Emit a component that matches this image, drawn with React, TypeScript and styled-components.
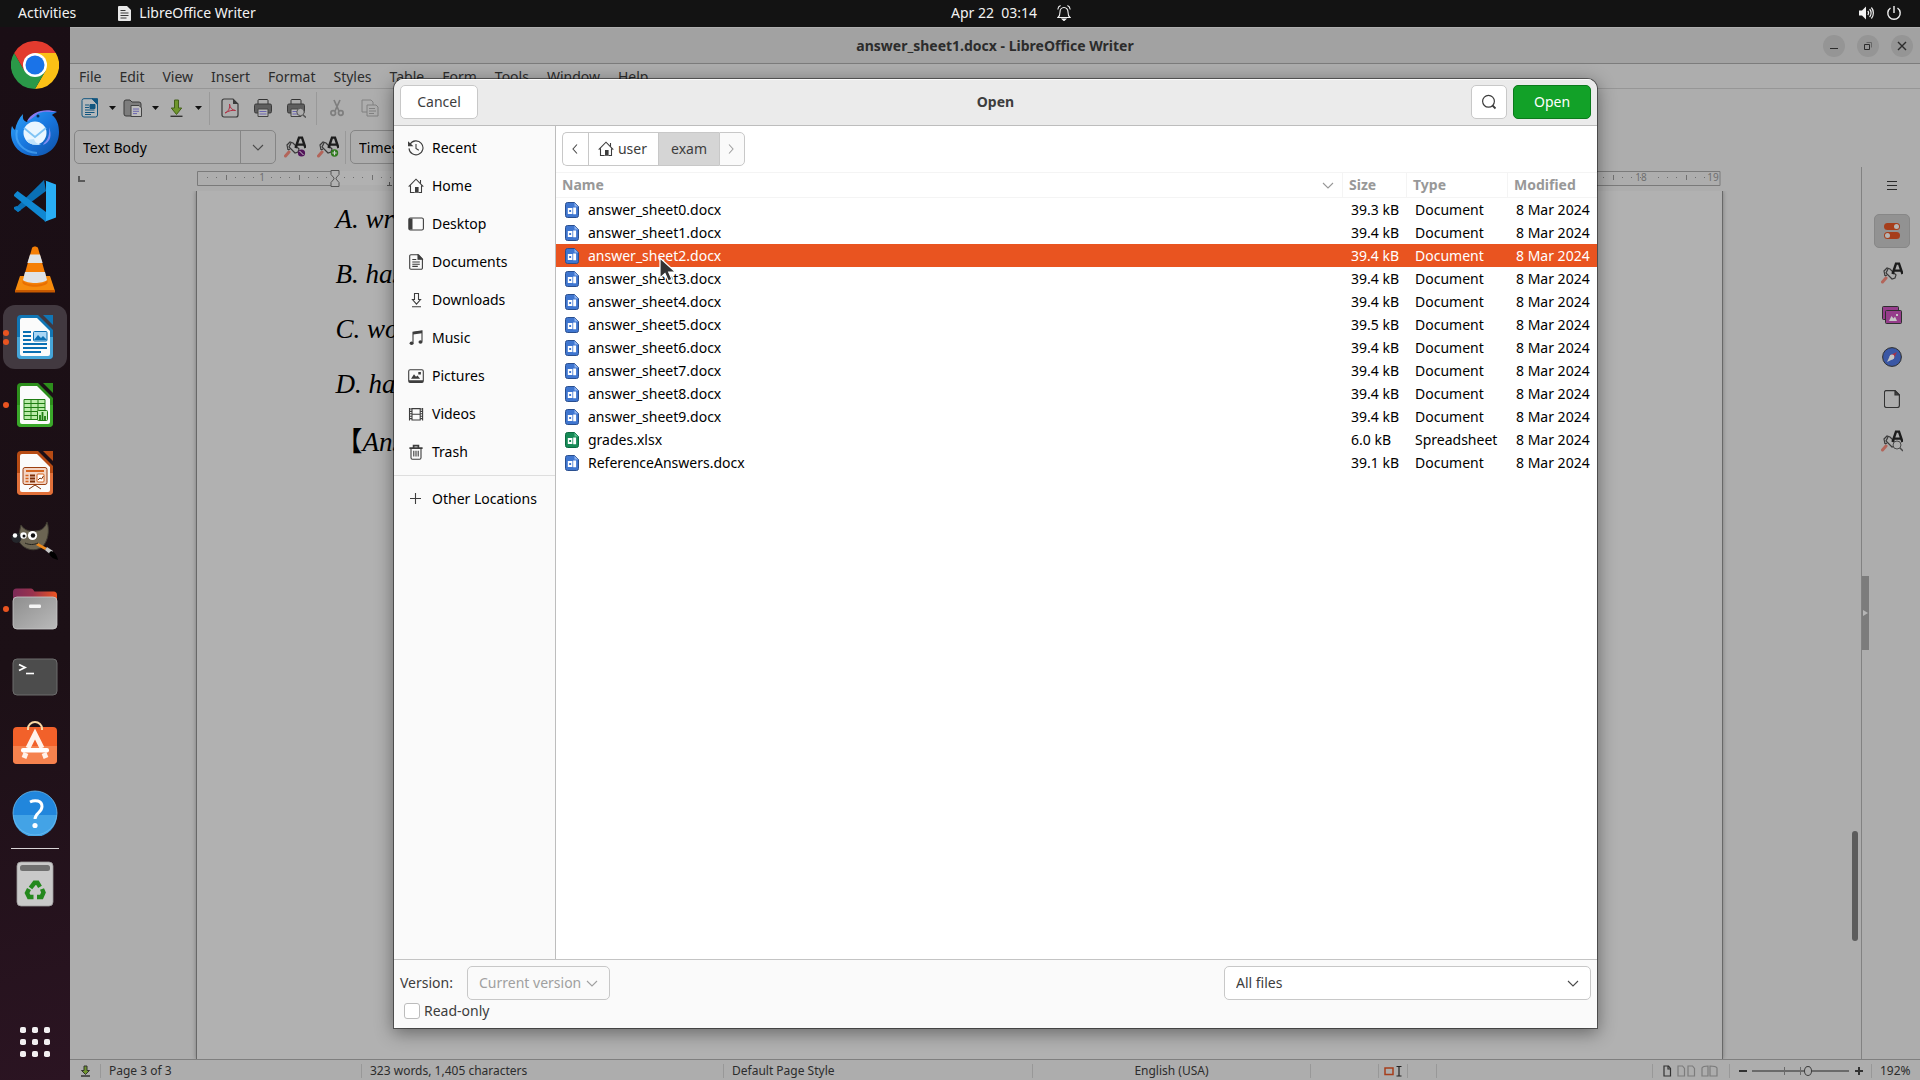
import React from "react";
import styled, { createGlobalStyle, css } from "styled-components";

const GlobalStyle = createGlobalStyle`
  * { box-sizing: border-box; }
  html, body, #root { height: 100%; margin: 0; }
  body {
    font-family: "Noto Sans", "Liberation Sans", sans-serif;
    font-size: 14px;
    line-height: 20px;
    color: #3d3d3d;
    overflow: hidden;
  }
  button, input, select { font: inherit; color: inherit; margin: 0; }
  button { padding: 0; border: 0; background: none; }
  ul { list-style: none; margin: 0; padding: 0; }
  svg { display: block; flex: none; }
`;

/* ---------- shell ---------- */

const Desktop = styled.div`
  height: 100vh;
  display: grid;
  grid-template-rows: 27px minmax(0, 1fr);
`;

const TopBar = styled.header`
  display: grid;
  grid-template-columns: 1fr auto 1fr;
  align-items: center;
  padding: 0 18px 1px;
  background: #131313;
  color: #f2f2f2;
`;

const TopGroup = styled.div<{ $end?: boolean; $gap: number }>`
  display: flex;
  align-items: center;
  gap: ${(p) => p.$gap}px;
  justify-content: ${(p) => (p.$end ? "flex-end" : "flex-start")};
`;

const AppMenu = styled.button`
  display: flex;
  align-items: center;
  gap: 8px;
`;

const Clock = styled.button`
  display: flex;
  align-items: center;
  gap: 20px;
  padding-left: 102px;
  white-space: pre;
`;

const Body = styled.div`
  display: grid;
  grid-template-columns: 70px minmax(0, 1fr);
  min-height: 0;
`;

const Dock = styled.nav`
  display: flex;
  flex-direction: column;
  align-items: center;
  gap: 4px;
  padding: 6px 0;
  background: linear-gradient(165deg, #1a0e15 0%, #1c1016 60%, #2b1422 100%);
`;

const DockItem = styled.button<{ $active?: boolean; $bottom?: boolean }>`
  position: relative;
  display: grid;
  place-items: center;
  flex: none;
  width: 64px;
  height: 64px;
  border-radius: 12px;
  background: ${(p) => (p.$active ? "#423940" : "transparent")};
  margin-top: ${(p) => (p.$bottom ? "auto" : "0")};
`;

const Dots = styled.span`
  position: absolute;
  left: 0;
  top: 0;
  bottom: 0;
  display: flex;
  flex-direction: column;
  justify-content: center;
  gap: 3px;
`;

const Dot = styled.i`
  width: 6px;
  height: 6px;
  border-radius: 50%;
  background: #e95420;
`;

const DockRule = styled.hr`
  flex: none;
  width: 48px;
  height: 1px;
  margin: -1px 0;
  border: 0;
  background: #d8d4d6;
`;

/* ---------- writer window ---------- */

const Window = styled.main`
  position: relative;
  display: grid;
  grid-template-rows: 37px 25px 38px minmax(0, 1fr) 21px;
  background: #adadad;
  color: #2c2c2c;
  min-width: 0;
`;

const TitleBar = styled.div`
  display: grid;
  grid-template-columns: 1fr auto 1fr;
  align-items: center;
  background: #a2a2a2;
  border-top: 1px solid #b0b0b0;
  border-bottom: 1px solid #7c7c7c;
  padding: 0 7px;
`;

const Title = styled.h1`
  grid-column: 2;
  margin: 0;
  font-size: 14px;
  font-weight: 700;
`;

const WinButtons = styled.div`
  display: flex;
  justify-content: flex-end;
  gap: 12px;
`;

const WinButton = styled.button`
  display: grid;
  place-items: center;
  width: 22px;
  height: 22px;
  border-radius: 50%;
  background: #959595;
`;

const MenuBar = styled.nav`
  display: flex;
  border-bottom: 1px solid #969696;
`;

const MenuItem = styled.button`
  padding: 3px 9px 1px;
`;

const ToolBar = styled.div`
  display: flex;
  align-items: center;
  gap: 6px;
  padding: 0 10px;
`;

const ToolGroup = styled.div`
  display: flex;
  align-items: center;
  gap: 13px;
  padding: 0 4px;
`;

const ToolButton = styled.button`
  display: grid;
  place-items: center;
  width: 20px;
  height: 24px;
`;

const SplitTool = styled.div`
  display: flex;
  align-items: center;
  gap: 7px;
`;

const Caret = styled.button`
  width: 10px;
  height: 24px;
  display: grid;
  place-items: center;
`;

const Rule = styled.span<{ $h: number }>`
  width: 1px;
  height: ${(p) => p.$h}px;
  background: #999;
  flex: none;
`;

const Workspace = styled.div`
  display: grid;
  grid-template-columns: minmax(0, 1fr) 59px;
  grid-template-rows: 40px minmax(0, 1fr);
  min-height: 0;
`;

const FormatBar = styled.div`
  grid-column: 1 / -1;
  display: flex;
  align-items: center;
  gap: 4px;
  padding: 0 4px;
`;

const Combo = styled.div<{ $w: number }>`
  display: flex;
  align-items: center;
  width: ${(p) => p.$w}px;
  height: 34px;
  border: 1px solid #858585;
  border-radius: 5px;
  color: #000;
  input {
    flex: 1;
    min-width: 0;
    height: 100%;
    padding: 0 8px;
    border: 0;
    background: none;
    outline: none;
  }
  button {
    display: grid;
    place-items: center;
    width: 35px;
    height: 100%;
    border-left: 1px solid #858585;
  }
`;

const Canvas = styled.div`
  display: grid;
  grid-template-columns: minmax(0, 1fr) 13px;
  grid-template-rows: 24px minmax(0, 1fr);
  min-height: 0;
`;

const RulerRow = styled.div`
  grid-column: 1;
  display: grid;
  grid-template-columns: 1fr auto 1fr;
  align-items: center;
`;

const TabMark = styled.svg`
  margin-left: 8px;
`;

const PageArea = styled.div`
  grid-column: 1;
  display: flex;
  justify-content: center;
  min-height: 0;
  overflow: hidden;
`;

const Paper = styled.article`
  width: 1527px;
  padding: 1px 139px 0;
  background: #b1b1b1;
  border: solid #686868;
  border-width: 0 1px;
  box-shadow: 0 0 4px rgba(0, 0, 0, 0.3);
  font-family: "Liberation Serif", "Noto Sans CJK SC", serif;
  font-style: italic;
  font-size: 27px;
  color: #000;
  p { margin: 0; height: 55px; line-height: 55px; }
  p:last-child { height: 60px; line-height: 60px; }
`;

const Upright = styled.span`
  font-style: normal;
`;

const ScrollTrack = styled.div`
  grid-column: 2;
  display: flex;
  flex-direction: column;
  justify-content: flex-end;
  align-items: flex-end;
  padding: 0 3px 118px 0;
`;

const ScrollThumb = styled.div`
  width: 6px;
  height: 110px;
  border-radius: 3px;
  background: #5c5c5c;
`;

const SideDeck = styled.aside`
  position: relative;
  display: flex;
  flex-direction: column;
  align-items: center;
  gap: 8px;
  padding: 2px 0 0 2px;
  border-left: 1px solid #828282;
`;

const DeckButton = styled.button<{ $active?: boolean }>`
  display: grid;
  place-items: center;
  width: 36px;
  height: 34px;
  border-radius: 5px;
  border: 1px solid ${(p) => (p.$active ? "#878787" : "transparent")};
  background: ${(p) => (p.$active ? "#929292" : "none")};
  &:first-child { margin-bottom: 3px; }
`;

const DeckHandle = styled.button`
  position: absolute;
  left: 0;
  top: 409px;
  width: 7px;
  height: 74px;
  display: grid;
  place-items: center;
  background: #7c7c7c;
`;

const StatusBar = styled.footer`
  display: flex;
  align-items: center;
  padding-top: 2px;
  border-top: 1px solid #7f7f7f;
  font-size: 12px;
  line-height: 16px;
`;

const StatusCell = styled.div<{ $w: number; $grow?: boolean; $mid?: boolean }>`
  display: flex;
  align-items: center;
  flex: ${(p) => (p.$grow ? 1 : 0)} 1 ${(p) => p.$w}px;
  gap: 5px;
  height: 14px;
  min-width: 0;
  white-space: nowrap;
  padding: 0 8px;
  justify-content: ${(p) => (p.$mid ? "center" : "flex-start")};
  border-right: 1px solid #989898;
  &:last-child { border: 0; }
`;

const Zoom = styled.input`
  appearance: none;
  width: 97px;
  height: 12px;
  margin: 0;
  background: linear-gradient(#6a6a6a, #6a6a6a) 0 5px / 100% 2px no-repeat,
    linear-gradient(#6a6a6a, #6a6a6a) 32px 2px / 1px 8px no-repeat,
    linear-gradient(#6a6a6a, #6a6a6a) 48px 2px / 1px 8px no-repeat;
  &::-webkit-slider-thumb {
    appearance: none;
    width: 8px;
    height: 10px;
    border: 1px solid #3c3c3c;
    border-radius: 50%;
    background: #adadad;
  }
`;

const StepButton = styled.button`
  width: 12px;
  height: 12px;
  display: grid;
  place-items: center;
`;

/* ---------- open dialog ---------- */

const Overlay = styled.div`
  position: absolute;
  inset: 0;
  display: grid;
  padding: 52px 323px 52px 324px;
`;

const Dialog = styled.section`
  display: grid;
  grid-template-rows: 47px minmax(0, 1fr) 69px;
  min-width: 0;
  overflow: hidden;
  border-radius: 10px 10px 0 0;
  background: #fff;
  color: #3d3d3d;
  box-shadow: 0 0 0 1px rgba(0, 0, 0, 0.45), 0 4px 18px 1px rgba(0, 0, 0, 0.42);
`;

const DialogHead = styled.header`
  display: grid;
  grid-template-columns: 1fr auto 1fr;
  align-items: center;
  padding: 0 6px 1px;
  background: #ebebeb;
  border-top: 1px solid #fbfbfb;
  border-bottom: 1px solid #bdbdbd;
`;

const DialogTitle = styled.h2`
  margin: 0;
  font-size: 14px;
  font-weight: 700;
`;

const HeadEnd = styled.div`
  display: flex;
  justify-content: flex-end;
  gap: 6px;
`;

const boxed = css`
  height: 34px;
  border: 1px solid #c8c8c8;
  border-radius: 5px;
  background: #fff;
`;

const Button = styled.button<{ $primary?: boolean; $w: number }>`
  ${boxed}
  display: grid;
  place-items: center;
  width: ${(p) => p.$w}px;
  ${(p) =>
    p.$primary &&
    css`
      background: #12a128;
      border-color: #0b7a1c;
      color: #fff;
    `}
`;

const DialogBody = styled.div`
  display: grid;
  grid-template-columns: 162px minmax(0, 1fr);
  min-height: 0;
`;

const Places = styled.nav`
  padding-top: 3px;
  background: #fafafa;
  border-right: 1px solid #bdbdbd;
  li:last-child {
    margin-top: 4px;
    padding-top: 4px;
    border-top: 1px solid #dedede;
  }
`;

const Place = styled.button`
  display: flex;
  align-items: center;
  gap: 8px;
  width: 100%;
  height: 38px;
  padding-left: 14px;
  color: #000;
  white-space: nowrap;
`;

const Files = styled.div`
  min-width: 0;
`;

const PathBar = styled.div`
  display: flex;
  margin: 6px;
  button {
    ${boxed}
    display: flex;
    align-items: center;
    justify-content: center;
    gap: 4px;
    border-radius: 0;
    border-right-width: 0;
  }
  button:first-child { border-radius: 5px 0 0 5px; }
  button:last-child { border-radius: 0 5px 5px 0; border-right-width: 1px; background: #fafafa; }
`;

const Crumb = styled.button<{ $w: number; $on?: boolean }>`
  && {
    width: ${(p) => p.$w}px;
    padding-right: ${(p) => (p.$on ? 0 : 2)}px;
    background: ${(p) => (p.$on ? "#d5d5d5" : "#fff")};
  }
`;

const Table = styled.table`
  width: 100%;
  table-layout: fixed;
  border-collapse: separate;
  border-spacing: 0;
  text-align: left;
  white-space: nowrap;
  color: #000;
  th {
    height: 26px;
    padding: 0 0 0 6px;
    font-weight: 700;
    color: #989898;
    border: solid #f4f4f4;
    border-width: 1px 0 1px 1px;
  }
  th:first-child { border-left: 0; }
  td { height: 23px; padding: 0 0 0 9px; line-height: 22px; }
`;

const SortHead = styled.div`
  display: flex;
  align-items: center;
  justify-content: space-between;
  padding-right: 8px;
`;

const Row = styled.tr<{ $selected?: boolean }>`
  background: ${(p) => (p.$selected ? "#e95420" : "transparent")};
  color: ${(p) => (p.$selected ? "#fff" : "#000")};
`;

const FileName = styled.div`
  display: flex;
  align-items: center;
  gap: 9px;
`;

const DialogFoot = styled.footer`
  display: grid;
  grid-template-columns: 1fr auto;
  align-content: start;
  gap: 0 6px;
  padding: 6px;
  background: #fafafa;
  border-top: 1px solid #c4c4c4;
`;

const VersionField = styled.div`
  display: flex;
  align-items: center;
  gap: 12px;
  label { width: 55px; }
`;

const SelectBox = styled.div<{ $w: number; $off?: boolean }>`
  display: grid;
  align-items: center;
  width: ${(p) => p.$w}px;
  select, svg { grid-area: 1 / 1; }
  select {
    ${boxed}
    appearance: none;
    width: 100%;
    padding: 0 28px 0 11px;
    opacity: 1;
    color: ${(p) => (p.$off ? "#a0a0a0" : "#3d3d3d")};
    background: ${(p) => (p.$off ? "#fafafa" : "#fff")};
  }
  svg { justify-self: end; margin-right: 12px; pointer-events: none; }
`;

const Check = styled.label`
  display: flex;
  align-items: center;
  gap: 4px;
  height: 22px;
  padding-left: 4px;
  input {
    appearance: none;
    width: 16px;
    height: 16px;
    border: 1px solid #bcbcbc;
    border-radius: 3px;
    background: #fff;
  }
`;

const Pointer = styled.svg`
  position: absolute;
  left: 589px;
  top: 230px;
`;

/* ---------- small icons ---------- */

const Chevron = ({ dir = "down", color = "#4a4a4a", size = 12 }: { dir?: string; color?: string; size?: number }) => {
  const d = dir === "down" ? "M1 4 6 9 11 4" : dir === "left" ? "M8 1.5 4 6l4 4.5" : "M4 1.5 8 6l-4 4.5";
  return (
    <svg width={size} height={size} viewBox="0 0 12 12" fill="none" stroke={color} strokeWidth="1.1">
      <path d={d} />
    </svg>
  );
};

const Line = ({ children, size = 16, color = "#3d3d3d" }: { children: React.ReactNode; size?: number; color?: string }) => (
  <svg width={size} height={size} viewBox="0 0 16 16" fill="none" stroke={color} strokeWidth="1.1">
    {children}
  </svg>
);

const HomeIcon = () => (
  <Line>
    <path d="M.7 8.6 8 1.2l7.3 7.4M12.5 2v3.2M2.5 7.5v7h4.2M13.5 7.5v7h-3" />
    <path d="M7 9h3.6v5.8H7z" fill="#3d3d3d" stroke="none" />
  </Line>
);

const placeIcons: Record<string, React.ReactNode> = {
  Recent: (
    <Line>
      <path d="M2 4.2A7 7 0 1 1 1 8.4M8 4v4.5l2.8 1.8" />
      <path d="M.3 2.2v3.6h3.8z" fill="#3d3d3d" />
    </Line>
  ),
  Home: <HomeIcon />,
  Desktop: (
    <Line>
      <rect x=".8" y="2" width="14.6" height="12" rx="1.6" />
      <path d="M1 2.5h3.5v11H1z" fill="#3d3d3d" stroke="none" />
    </Line>
  ),
  Documents: (
    <Line>
      <path d="M3 .8h7.5L14.4 5v9a1.2 1.2 0 0 1-1.2 1.2H3A1.2 1.2 0 0 1 1.7 14V2A1.2 1.2 0 0 1 3 .8zM4.3 5.5h4M4.3 8h7.5M4.3 10.2h7.5M4.3 12.4h5.5" />
      <path d="M10 1v4.3h4.2z" fill="#3d3d3d" />
    </Line>
  ),
  Downloads: (
    <Line>
      <path d="M6.5 1.5h4v6h2l-4 4.6-4-4.6h2zM4 14.8h9" />
    </Line>
  ),
  Music: (
    <Line>
      <path d="M5 12.8V2.2l9-1.2v10.6" />
      <path d="M5 2l9-1.2v2.4L5 4.4z" fill="#3d3d3d" stroke="none" />
      <ellipse cx="3.6" cy="13.2" rx="2" ry="1.7" fill="#3d3d3d" stroke="none" />
      <ellipse cx="12.5" cy="12" rx="2" ry="1.7" fill="#3d3d3d" stroke="none" />
    </Line>
  ),
  Pictures: (
    <Line>
      <rect x=".7" y="1.8" width="14.6" height="12.6" rx="1.4" />
      <path d="M1 12.2h14v2H1zM3 10.8l3-4.6 2 2.6 1.5-1.4 2.6 3.4zM10.3 4h2.6v2.4h-2.6z" fill="#3d3d3d" stroke="none" />
    </Line>
  ),
  Videos: (
    <Line>
      <path d="M1.5 2v12.6M14.6 2v12.6M4 2v12.6M12.2 2v12.6M4 2.6h8.2M4 8.2h8.2M4 14h8.2" />
      <path d="M1.5 3h2.5M1.5 5.4h2.5M1.5 7.8h2.5M1.5 10.2h2.5M1.5 12.6h2.5M12.2 3h2.4M12.2 5.4h2.4M12.2 7.8h2.4M12.2 10.2h2.4M12.2 12.6h2.4" />
    </Line>
  ),
  Trash: (
    <Line>
      <path d="M3 5v8.8c0 .8.5 1.4 1.4 1.4h7.2c.9 0 1.4-.6 1.4-1.4V5M5.8 6.8v5.6M8 6.8v5.6M10.2 6.8v5.6" />
      <path d="M1.4 4.2h13.2M5.6 4V1.6h4.8V4" strokeWidth="1.7" />
    </Line>
  ),
  "Other Locations": (
    <Line>
      <path d="M7.5 2v11M2 7.5h11" />
    </Line>
  ),
};

const FileIcon = ({ sheet }: { sheet?: boolean }) => {
  const dark = sheet ? "#0b6b41" : "#2a4f8f";
  const main = sheet ? "#178a56" : "#3f76d0";
  return (
    <svg width="14" height="16" viewBox="0 0 14 16">
      <path d="M2.5.5h7l4 4v9a2 2 0 0 1-2 2h-9a2 2 0 0 1-2-2v-11a2 2 0 0 1 2-2z" fill={main} stroke={dark} />
      <path d="M9.5.8v3.7h3.8z" fill={sheet ? "#5fc294" : "#8fb4f0"} />
      <path d="M2.8 6h4.6v6H2.8zM8.2 5.6h2.9v6.6H8.2z" fill="#fff" />
      <path d="M4.2 8h1.9v2H4.2z" fill={main} />
    </svg>
  );
};

const Brush = ({ badge, size = 22 }: { badge?: "none" | "plus" | "find"; size?: number }) => (
  <svg width={size} height={size} viewBox="0 0 22 22" fill="none">
    <path d="M1.5 20 5 16" stroke="#b3655a" strokeWidth="3" strokeLinecap="round" />
    <path d="M4 14 3 9l3-3 3 1 6 6-1 3-3 1-6-6 2-4M4 14l2-1" stroke="#3a3a3a" strokeWidth="1.2" />
    <path d="M11.5 12 15 1.6h3L21.5 12M13 8.6h7" stroke="#1c1c1c" strokeWidth="2.4" />
    {badge === "none" && (
      <>
        <circle cx="17.5" cy="17" r="3.6" fill="#52145a" />
        <path d="m15.5 15 4 4" stroke="#c9c9c9" />
      </>
    )}
    {badge === "plus" && (
      <>
        <circle cx="17.5" cy="17" r="3.7" fill="#2f7a1d" />
        <path d="M17.5 14.8v4.4M15.3 17h4.4" stroke="#d5d5d5" strokeWidth="1.2" />
      </>
    )}
    {badge === "find" && (
      <>
        <circle cx="16" cy="15" r="4" fill="#adadad" stroke="#4a4a4a" />
        <path d="m19 18 3 3" stroke="#4a4a4a" strokeWidth="1.4" />
      </>
    )}
  </svg>
);

const CaretIcon = () => (
  <svg width="7" height="4" viewBox="0 0 7 4">
    <path d="M0 0h7L3.5 4z" fill="#111" />
  </svg>
);

const SaveIcon = () => (
  <svg width="20" height="20" viewBox="0 0 20 20">
    <path d="M8.5 2h4v8h3.2l-5.2 6.5L5.3 10h3.2z" fill="#6f962c" stroke="#44601a" />
    <path d="M4.5 18.3h12" stroke="#333" strokeWidth="1.4" />
  </svg>
);

const SavedMark = () => (
  <svg width="12" height="12" viewBox="0 0 12 12">
    <path d="M5 1h3v4.500h2.500L6.500 9.500 2.500 5.500H5z" fill="#6f962c" stroke="#333" />
    <path d="M2 11h9" stroke="#333" strokeWidth="1.5" />
  </svg>
);

const Printer = ({ find }: { find?: boolean }) => (
  <svg width="20" height="20" viewBox="0 0 20 20" fill="none">
    <path d="M5 7V2.5c0-.6.4-1 1-1h8c.6 0 1 .4 1 1V7" stroke="#333" fill="#adadad" />
    <rect x="1.5" y="6" width="17" height="9" rx="1.5" fill="#5e5e5e" stroke="#3a3a3a" />
    <path d="M5 11h10v7.5H5z" fill="#b8b8b8" stroke="#444" />
    <path d="M6.5 13.500h7M6.5 16h7" stroke="#6a64b0" />
    {find && (
      <>
        <circle cx="14.5" cy="14" r="3.7" fill="#adadad" stroke="#555" />
        <path d="m17 17 3 2.6" stroke="#555" strokeWidth="1.5" />
      </>
    )}
  </svg>
);

/* ---------- dock icons ---------- */

const Chrome = () => (
  <svg width="48" height="48" viewBox="0 0 48 48">
    <path d="M24 24V12h20.8A24 24 0 0 1 24 48L34.4 30z" fill="#fbc116" />
    <path d="M24 24 34.4 30 24 48A24 24 0 0 1 3.2 12L13.6 30z" fill="#2a9948" />
    <path d="M3.2 12A24 24 0 0 1 44.8 12H24L13.6 30z" fill="#e33b2e" />
    <circle cx="24" cy="24" r="12" fill="#fff" />
    <circle cx="24" cy="24" r="9.5" fill="#1a73e8" />
  </svg>
);

const Thunderbird = () => (
  <svg width="48" height="48" viewBox="0 0 48 48">
    <defs>
      <linearGradient id="tb" x1="0" y1="0" x2="1" y2="1">
        <stop offset="0" stopColor="#2fa4f7" />
        <stop offset=".5" stopColor="#1877df" />
        <stop offset="1" stopColor="#0e4fa5" />
      </linearGradient>
    </defs>
    <path d="M16 13C20 4 30 0 46 3c-2 1-4 2-5 3 5 4 7 10 7 17 0 14-10 24-24 24S0 37 0 24c0-3 .4-5 1-7 1 2 2 3 3 4 1-6 4-12 8-16-.5 5 .5 7 4 8z" fill="url(#tb)" />
    <path d="M46 3C34-1 22 2 16 12c6-2 8-6 12-8 5-2 11-1 18-1z" fill="#8b7af0" />
    <path d="M6 21c-3 12 6 22 20 23" fill="none" stroke="#5bb8ff" strokeWidth="2" opacity=".55" />
    <path d="M33 34c4-3 6-9 5-16 3 8 2 15-6 18z" fill="#7f8ef2" />
    <circle cx="24" cy="24" r="11.5" fill="#e9f6ff" />
    <path d="m13 19 11 9 11-9" fill="none" stroke="#7fc4f5" strokeWidth="1.8" />
    <path d="M15 31c4 5 9 5 15 5-5-2-6-3-7-6z" fill="#bfe2fb" />
    <circle cx="27" cy="7" r="1.5" fill="#062b55" />
  </svg>
);

const Code = () => (
  <svg width="44" height="44" viewBox="0 0 44 44">
    <path d="M1.5 30 31 1l2 11L5 33z" fill="#0a70b5" />
    <path d="M1 15.5 4.5 12l28.500 21v10L1 17z" fill="#1088d2" />
    <path d="M1 28v2l4 3 3-2-4-4z" fill="#0a78bf" />
    <path d="M31 1 43 5.5v33L31 43c1 0 2-.6 2-2V3c0-1.4-1-2-2-2z" fill="#29aef5" />
  </svg>
);

const Cone = () => (
  <svg width="42" height="48" viewBox="0 0 42 48">
    <path d="M6 31h30l5 15v1H1v-1z" fill="#f68b0c" />
    <path d="M1 45h40v2.5H1z" fill="#c85a00" />
    <path d="M18 3c1-2 5-2 6 0l9 32c-3 6-21 6-24 0z" fill="#f57f06" />
    <path d="M16 9.5h10l2.6 8.5H13.4z" fill="#dfe3e6" />
    <path d="M11 27h20l2 8c-4 4-20 4-24 0z" fill="#dfe3e6" />
    <path d="M8.5 35c3 6 22 6 25 0v3c-4 5-21 5-25 0z" fill="#e86f00" />
  </svg>
);

const Office = ({ dark, light, children }: { dark: string; light: string; children: React.ReactNode }) => (
  <svg width="38" height="46" viewBox="0 0 38 46">
    <path d="M5 1h17l15 15v25a4 4 0 0 1-4 4H5a4 4 0 0 1-4-4V5a4 4 0 0 1 4-4z" fill={dark} />
    <path d="M1 23h36v18a4 4 0 0 1-4 4H5a4 4 0 0 1-4-4z" fill={light} />
    <path d="M6 4h15l13 13v23a2 2 0 0 1-2 2H6a2 2 0 0 1-2-2V6a2 2 0 0 1 2-2z" fill="#fbfbfb" />
    <path d="M27 1h10v10z" fill={dark} />
    {children}
  </svg>
);

const WriterIcon = () => (
  <Office dark="#1176b5" light="#46a5d8">
    <path d="M7 18h8M7 22h8M7 26h8M7 30h24M7 34h24M7 38h18" stroke="#0b70b3" strokeWidth="2" />
    <rect x="17.5" y="17.5" width="13.5" height="9.5" rx="1" fill="#a9d6f5" stroke="#0b70b3" />
    <path d="m18 26 4-5 3 3 2-2 4 4z" fill="#0b70b3" />
  </Office>
);

const CalcIcon = () => (
  <Office dark="#2d8f1c" light="#3aa82a">
    <path d="M8 17.5h21v20H8z" fill="#b9eba8" stroke="#1f7d12" />
    <path d="M8 21.5h21M8 25.5h21M8 29.5h21M8 33.5h21M15 17.5v20M22 17.5v20" stroke="#1f7d12" />
    <rect x="21.5" y="28.5" width="10" height="10" rx="1" fill="#c6f0b8" stroke="#1f7d12" />
    <path d="M24 38v-5M26.5 38v-8M29 38v-4" stroke="#1f7d12" strokeWidth="1.8" />
  </Office>
);

const ImpressIcon = () => (
  <Office dark="#b64b14" light="#e0703a">
    <rect x="7" y="17.5" width="24" height="17" rx="2" fill="#f3d5c5" stroke="#9c3f10" />
    <path d="M10 21h18" stroke="#d4631f" strokeWidth="2" />
    <path d="M9.5 25.5h3M9.5 28.5h3M9.5 31.5h3" stroke="#d4631f" strokeWidth="1.5" />
    <path d="M14 25.5h5M14 28.5h5M14 31.5h5" stroke="#7d2f08" strokeWidth="1.8" />
    <rect x="21" y="24" width="7" height="8" rx="1" fill="#fff" stroke="#d4631f" />
    <path d="m22 30 2-2 1.5 1 2-3M19 35l-6 4M19 35l6 4" stroke="#7d2f08" fill="none" />
  </Office>
);

const Gimp = () => (
  <svg width="48" height="48" viewBox="0 -1 48 48">
    <path d="M10 7c3 5 9 7 14 6 6 0 10-3 12-9 3 8 1 20-5 25-7 5-17 3-22-4-2-3-1-10 1-18z" fill="#6b6452" stroke="#3e3a31" />
    <path d="m27 25 9 5-2 2-9-5z" fill="#f08a1c" />
    <path d="m36 29 6 4-2 4-6-5z" fill="#c8c8c8" />
    <path d="M40 33c4 1 6 4 7 9-4-1-8-3-9-7z" fill="#000" />
    <circle cx="5.5" cy="20" r="5" fill="#24262b" />
    <circle cx="4" cy="17.5" r="2.200" fill="#fff" />
    <circle cx="12.5" cy="17.5" r="3.2" fill="#fff" />
    <circle cx="13" cy="18" r="1.5" fill="#111" />
    <circle cx="21.5" cy="17.5" r="4.6" fill="#fff" />
    <circle cx="22" cy="17.5" r="2.2" fill="#111" />
    <path d="M14 25c4 2 9 2 13 0" stroke="#26231d" fill="none" />
  </svg>
);

const FilesIcon = () => (
  <svg width="46" height="42" viewBox="0 0 46 42">
    <defs>
      <linearGradient id="fo" x1="0" x2="1">
        <stop offset="0" stopColor="#7d2b58" />
        <stop offset=".45" stopColor="#99324e" />
        <stop offset="1" stopColor="#ee5622" />
      </linearGradient>
      <linearGradient id="ff" x1="0" y1="0" x2="1" y2="1">
        <stop offset="0" stopColor="#8e8e8e" />
        <stop offset="1" stopColor="#bababa" />
      </linearGradient>
    </defs>
    <path d="M1 4a3.5 3.5 0 0 1 3.5-3.5h14c1 0 2 .4 2.5 1l1.5 2h19A3.5 3.5 0 0 1 45 7v10H1z" fill="url(#fo)" />
    <rect x="1" y="9" width="44" height="32" rx="4" fill="url(#ff)" stroke="#c9c9c9" strokeWidth=".8" />
    <rect x="17" y="16.5" width="12" height="3.5" rx="1.2" fill="#f5f5f5" />
  </svg>
);

const TerminalIcon = () => (
  <svg width="46" height="38" viewBox="0 0 46 38">
    <rect x="1" y="1" width="44" height="36" rx="4" fill="#4c4c4c" stroke="#6c6c6c" />
    <path d="m7 6.5 6 3-6 3" stroke="#fff" strokeWidth="1.8" fill="none" />
    <path d="M14 15.500h8" stroke="#fff" strokeWidth="1.6" />
  </svg>
);

const Software = () => (
  <svg width="46" height="48" viewBox="0 2 46 48">
    <rect x="1" y="8" width="44" height="37" rx="4" fill="#f2612a" />
    <path d="M1 27h44v14a4 4 0 0 1-4 4H5a4 4 0 0 1-4-4z" fill="#f5824e" />
    <path d="M16 11V9.500a7 6.500 0 0 1 14 0V11" fill="none" stroke="#fbd9a5" strokeWidth="2" />
    <path d="m16 29 7-14 7 14M14 34l-2 5M32 34l2 5" stroke="#fff3ec" strokeWidth="5" fill="none" />
    <rect x="9" y="29" width="28" height="4.5" rx="2" fill="#fff" />
  </svg>
);

const HelpIcon = () => (
  <svg width="46" height="46" viewBox="0 0 46 46">
    <circle cx="23" cy="23" r="22" fill="#2186dc" />
    <path d="M1 25a22 22 0 0 0 44 0z" fill="#43a3e6" />
    <circle cx="23" cy="23" r="22" fill="none" stroke="#6cbcf0" strokeWidth=".8" />
    <path d="M18 12c5-2.5 12-1.500 12 4.5 0 6-7 6.5-7 12.5" stroke="#fff" strokeWidth="3" fill="none" />
    <circle cx="23" cy="35.5" r="2.6" fill="#fff" />
  </svg>
);

const TrashCan = () => (
  <svg width="38" height="46" viewBox="0 0 38 46">
    <rect x="1" y="1" width="36" height="44" rx="4" fill="#c9c9c9" stroke="#9c9c9c" strokeWidth=".8" />
    <rect x="4" y="4" width="30" height="6" rx="2.5" fill="#707070" />
    <g fill="none" stroke="#24881d" strokeWidth="4.4">
      <path d="m14.5 27 4-5.2h3l2.5 4" />
      <path d="m26 28 1.5 3.5-2 4.500H21" />
      <path d="M17.5 36H13l-2-4 2-4" />
    </g>
  </svg>
);

const AppsGrid = () => (
  <svg width="30" height="30" viewBox="0 0 30 30" fill="#f2f0f1">
    {[0, 12, 24].map((y) => [0, 12, 24].map((x) => <rect key={`${x}-${y}`} x={x} y={y} width="6" height="6" rx="1.8" />))}
  </svg>
);

const dock = [
  { name: "Google Chrome", icon: <Chrome /> },
  { name: "Thunderbird", icon: <Thunderbird /> },
  { name: "Visual Studio Code", icon: <Code /> },
  { name: "VLC", icon: <Cone /> },
  { name: "LibreOffice Writer", icon: <WriterIcon />, open: 2, active: true },
  { name: "LibreOffice Calc", icon: <CalcIcon />, open: 1 },
  { name: "LibreOffice Impress", icon: <ImpressIcon /> },
  { name: "GIMP", icon: <Gimp /> },
  { name: "Files", icon: <FilesIcon />, open: 1 },
  { name: "Terminal", icon: <TerminalIcon /> },
  { name: "Software", icon: <Software /> },
  { name: "Help", icon: <HelpIcon /> },
];

/* ---------- data ---------- */

const menus = ["File", "Edit", "View", "Insert", "Format", "Styles", "Table", "Form", "Tools", "Window", "Help"];

const sizes = ["39.3", "39.4", "39.4", "39.4", "39.4", "39.5", "39.4", "39.4", "39.4", "39.4"];
const files = [
  ...sizes.map((s, i) => ({ name: `answer_sheet${i}.docx`, size: `${s} kB`, type: "Document" })),
  { name: "grades.xlsx", size: "6.0 kB", type: "Spreadsheet" },
  { name: "ReferenceAnswers.docx", size: "39.1 kB", type: "Document" },
];

/* one centimetre of the ruler is 73 units; the text area starts at 138 */
const Ruler = () => {
  const ticks: React.ReactNode[] = [];
  for (let i = -14; i <= 150; i++) {
    if (i % 8 === 0) continue;
    const x = Math.round(138 + (i * 73) / 8);
    const half = i % 4 === 0;
    ticks.push(<path key={i} d={half ? `M${x}.5 5v5` : `M${x}.5 7v1`} />);
  }
  return (
    <svg width="1524" height="18" viewBox="0 0 1524 18" fill="none" stroke="#6f6f6f">
      <path d="M138 1h1240v14H138z" fill="#b1b1b1" stroke="none" />
      <path d="M138 1.500H.5v14H138M1378 1.5h145v14h-145" stroke="#7a7a7a" />
      {ticks}
      <g fill="#6f6f6f" stroke="none" fontSize="10" textAnchor="middle">
        <text x="65" y="11">1</text>
        <text x="1444" y="11">18</text>
        <text x="1516" y="11">19</text>
      </g>
      <path d="M134 .5h8v4l-3 3.5v1l3 3.5v4h-8v-4l3-3.500V8l-3-3.500z" fill="#b1b1b1" stroke="#555" />
      <path d="M190 15.500h5M192.500 12v3" stroke="#555" />
    </svg>
  );
};

export default function App() {
  return (
    <Desktop>
      <GlobalStyle />
      <TopBar>
        <TopGroup $gap={42}>
          <button>Activities</button>
          <AppMenu>
            <svg width="13" height="15" viewBox="0 0 13 15">
              <path d="M1 0h8l4 4v10a1 1 0 0 1-1 1H1a1 1 0 0 1-1-1V1a1 1 0 0 1 1-1z" fill="#e8e8e8" />
              <path d="M2.5 4.5h5M2.5 7h8M2.5 9.5h8M2.5 12h6" stroke="#3a3a3a" />
            </svg>
            LibreOffice Writer
          </AppMenu>
        </TopGroup>
        <Clock>
          {"Apr 22  03:14"}
          <svg width="14" height="16" viewBox="0 0 14 16" fill="none" stroke="#f2f2f2" strokeWidth="1.1">
            <path d="M1 12.5h12c-2-1.5-2-3-2-5.5 0-2.5-1.5-4.5-4-4.5S3 4.5 3 7c0 2.5 0 4-2 5.5zM.8 4.5C1 2.5 2 1.2 3.6.6M13.2 4.5C13 2.5 12 1.2 10.4.6" />
            <path d="M5.3 14h3.4L7 15.6z" fill="#f2f2f2" />
          </svg>
        </Clock>
        <TopGroup $end $gap={12}>
          <svg width="16" height="16" viewBox="0 0 16 16" fill="none" stroke="#f2f2f2" strokeWidth="1.2">
            <path d="M1 5.5h3L8 1.5v13L4 10.5H1z" fill="#f2f2f2" stroke="none" />
            <path d="M9.8 6c1 1.2 1 2.8 0 4M11.6 4c2 2.2 2 5.8 0 8M13.4 2.5c2.6 3 2.6 8 0 11" />
          </svg>
          <svg width="16" height="16" viewBox="0 0 16 16" fill="none" stroke="#f2f2f2" strokeWidth="1.4">
            <path d="M4.5 3a6.2 6.2 0 1 0 7 0M8 1v7" />
          </svg>
        </TopGroup>
      </TopBar>

      <Body>
        <Dock aria-label="Dock">
          {dock.map((d) => (
            <DockItem key={d.name} aria-label={d.name} $active={d.active}>
              {d.open && (
                <Dots>
                  {Array.from({ length: d.open }, (_, i) => (
                    <Dot key={i} />
                  ))}
                </Dots>
              )}
              {d.icon}
            </DockItem>
          ))}
          <DockRule />
          <DockItem aria-label="Trash">
            <TrashCan />
          </DockItem>
          <DockItem aria-label="Show Applications" $bottom>
            <AppsGrid />
          </DockItem>
        </Dock>

        <Window>
          <TitleBar>
            <Title>answer_sheet1.docx - LibreOffice Writer</Title>
            <WinButtons>
              <WinButton aria-label="Minimize">
                <svg width="10" height="10" viewBox="0 0 10 10" stroke="#2c2c2c"><path d="M1 7.5h8" /></svg>
              </WinButton>
              <WinButton aria-label="Restore">
                <svg width="10" height="10" viewBox="0 0 10 10" fill="none" stroke="#2c2c2c">
                  <path d="M1.5 3.5h5v5h-5z" /><path d="M3.5 1.5h5v5" stroke="#666" />
                </svg>
              </WinButton>
              <WinButton aria-label="Close">
                <svg width="10" height="10" viewBox="0 0 10 10" stroke="#2c2c2c" strokeWidth="1.4"><path d="m1 1 8 8M9 1 1 9" /></svg>
              </WinButton>
            </WinButtons>
          </TitleBar>
          <MenuBar>
            {menus.map((m) => (
              <MenuItem key={m}>{m}</MenuItem>
            ))}
          </MenuBar>
          <ToolBar>
            <SplitTool>
              <ToolButton aria-label="New">
                <svg width="18" height="20" viewBox="0 0 18 20" fill="none" stroke="#12567f">
                  <path d="M3 .7h9l4.5 4.5V17a2 2 0 0 1-2 2H3a2 2 0 0 1-2-2V2.5A2 2 0 0 1 3 .7z" fill="#b4b8ba" />
                  <path d="M11 .7h5.5v6z" fill="#12567f" />
                  <path d="M4 7h4M4 9.5h4M4 12h9.5M4 14.5h9.5M4 16.5h6" strokeWidth="1.2" />
                  <path d="M9 6.5h5v4H9z" fill="#12567f" />
                </svg>
              </ToolButton>
              <Caret aria-label="New options"><CaretIcon /></Caret>
            </SplitTool>
            <SplitTool>
              <ToolButton aria-label="Open">
                <svg width="20" height="18" viewBox="0 0 20 18">
                  <path d="M1 3a2 2 0 0 1 2-2h4l2 2h7a2 2 0 0 1 2 2v10a2 2 0 0 1-2 2H3a2 2 0 0 1-2-2z" fill="#7d7d7d" stroke="#3a3a3a" />
                  <path d="M8 6.5h8l2.5 2.5v8.5H8z" fill="#bdbdbd" stroke="#444" />
                  <path d="M10 10h6M10 12.3h6M10 14.6h4" stroke="#6a64b0" />
                </svg>
              </ToolButton>
              <Caret aria-label="Open options"><CaretIcon /></Caret>
            </SplitTool>
            <SplitTool>
              <ToolButton aria-label="Save"><SaveIcon /></ToolButton>
              <Caret aria-label="Save options"><CaretIcon /></Caret>
            </SplitTool>
            <Rule $h={33} />
            <ToolGroup>
              <ToolButton aria-label="Export as PDF">
                <svg width="18" height="20" viewBox="0 0 18 20" fill="none">
                  <path d="M3 1h9l5 5v11a2 2 0 0 1-2 2H3a2 2 0 0 1-2-2V3a2 2 0 0 1 2-2z" stroke="#3a3a3a" strokeWidth="1.2" />
                  <path d="M12 1v5h5z" fill="#3a3a3a" />
                  <path d="M4 15c4-2 5-5 4.500-9C9 10 11 12 14.500 12.500c-3-.5-6.500 0-10.500 2.500z" stroke="#b03044" />
                </svg>
              </ToolButton>
              <ToolButton aria-label="Print"><Printer /></ToolButton>
              <ToolButton aria-label="Print preview"><Printer find /></ToolButton>
            </ToolGroup>
            <Rule $h={33} />
            <ToolGroup>
              <ToolButton aria-label="Cut">
                <svg width="14" height="18" viewBox="0 0 14 18" fill="none" stroke="#7e7e7e" strokeWidth="1.7">
                  <path d="M4 1l5 11M10 1 5 12" /><circle cx="3.2" cy="14" r="2.3" /><circle cx="10.8" cy="14" r="2.3" />
                </svg>
              </ToolButton>
              <ToolButton aria-label="Copy">
                <svg width="18" height="18" viewBox="0 0 18 18" fill="#adadad" stroke="#808080">
                  <path d="M1 1h9l2 2v10H1z" /><path d="M6 6h9l2 2v9H6zM8 9.5h6M8 12h7M8 14.5h5" />
                </svg>
              </ToolButton>
            </ToolGroup>
          </ToolBar>

          <Workspace>
            <FormatBar>
              <Combo $w={202}>
                <input aria-label="Paragraph style" defaultValue="Text Body" />
                <button aria-label="Show styles"><Chevron /></button>
              </Combo>
              <ToolGroup>
                <ToolButton aria-label="Update style"><Brush badge="none" /></ToolButton>
                <ToolButton aria-label="New style"><Brush badge="plus" /></ToolButton>
              </ToolGroup>
              <Rule $h={33} />
              <Combo $w={202}>
                <input aria-label="Font name" defaultValue="Times New Roman" />
                <button aria-label="Show fonts"><Chevron /></button>
              </Combo>
            </FormatBar>

            <Canvas>
              <RulerRow>
                <TabMark width="7" height="6" viewBox="0 0 7 6" fill="none" stroke="#5a5a5a" strokeWidth="2">
                  <path d="M1 0v5h6" />
                </TabMark>
                <Ruler />
              </RulerRow>
              <PageArea>
                <Paper>
                  <p>A. wr</p>
                  <p>B. has</p>
                  <p>C. wo</p>
                  <p>D. has</p>
                  <p><Upright>【</Upright>Ans</p>
                </Paper>
              </PageArea>
              <ScrollTrack>
                <ScrollThumb />
              </ScrollTrack>
            </Canvas>

            <SideDeck>
              <DeckButton aria-label="Sidebar settings">
                <svg width="10" height="10" viewBox="0 0 10 10" stroke="#2a2a2a"><path d="M0 .5h10M0 4.5h10M0 8.5h10" /></svg>
              </DeckButton>
              <DeckButton aria-label="Properties" $active>
                <svg width="16" height="16" viewBox="0 0 16 16">
                  <rect width="16" height="7" rx="3.5" fill="#a63e1b" /><rect y="9" width="16" height="7" rx="3.5" fill="#a63e1b" />
                  <circle cx="12.5" cy="3.5" r="2.5" fill="#b5b5b5" /><circle cx="3.5" cy="12.5" r="2.5" fill="#b5b5b5" />
                </svg>
              </DeckButton>
              <DeckButton aria-label="Styles"><Brush /></DeckButton>
              <DeckButton aria-label="Gallery">
                <svg width="20" height="18" viewBox="0 0 20 18" stroke="#2f2f2f" fill="#953d8b">
                  <rect x=".5" y=".5" width="16" height="13" rx="1" /><rect x="3.5" y="4.5" width="16" height="13" rx="1" />
                  <path d="m7 15 2.5-5 2 2.5 1.5-2L15 15zM14 8h2v2h-2z" fill="#c5c5c5" stroke="none" />
                </svg>
              </DeckButton>
              <DeckButton aria-label="Navigator">
                <svg width="20" height="20" viewBox="0 0 20 20">
                  <circle cx="10" cy="10" r="9.4" fill="#3a57a5" stroke="#2f2f2f" />
                  <path d="m15 5-3.2 6.8L8.2 8.2z" fill="#a83246" /><path d="m5 15 3.2-6.8 3.6 3.6z" fill="#c5c5c5" />
                  <circle cx="10" cy="10" r="2.4" fill="#c5c5c5" />
                </svg>
              </DeckButton>
              <DeckButton aria-label="Page">
                <svg width="16" height="18" viewBox="0 0 16 18" fill="none" stroke="#333" strokeWidth="1.2">
                  <path d="M2.5.6H11L15.4 5v10.500a2 2 0 0 1-2 2h-11a2 2 0 0 1-2-2v-13a2 2 0 0 1 2-2z" /><path d="M11 .6V5h4.4z" fill="#444" />
                </svg>
              </DeckButton>
              <DeckButton aria-label="Style inspector"><Brush badge="find" /></DeckButton>
              <DeckHandle aria-label="Collapse sidebar">
                <svg width="5" height="6" viewBox="0 0 5 6"><path d="M0 0v6l5-3z" fill="#b5b5b5" /></svg>
              </DeckHandle>
            </SideDeck>
          </Workspace>

          <StatusBar>
            <StatusCell $w={31} $mid><SavedMark /></StatusCell>
            <StatusCell $w={261}>Page 3 of 3</StatusCell>
            <StatusCell $w={362}>323 words, 1,405 characters</StatusCell>
            <StatusCell $w={309}>Default Page Style</StatusCell>
            <StatusCell $w={278} $mid>English (USA)</StatusCell>
            <StatusCell $w={68} />
            <StatusCell $w={29} $mid>
              <svg width="18" height="12" viewBox="0 0 18 12" fill="none" stroke="#a63e1b" strokeWidth="1.5">
                <path d="M1 3h8v6.500H1z" /><path d="M12.500 1.500h5M12.500 11h5M15 1.500V11" stroke="#222" strokeWidth="1.2" />
              </svg>
            </StatusCell>
            <StatusCell $w={29} />
            <StatusCell $w={216} $grow />
            <StatusCell $w={77} $mid>
              <svg width="56" height="12" viewBox="0 0 56 12" fill="none" strokeWidth="1.2">
                <path d="M1 1h4.500l2 2.500V11H1zM5 1v3h2.500" stroke="#333" />
                <path d="M15 1h4.500l2 2.500V11H15zM25 1h4.500l2 2.500V11H25zM39 3c1-2 3-2 6-2v10h-6zM54 3c-1-2-3-2-7-2v10h7z" stroke="#7c7c7c" />
              </svg>
            </StatusCell>
            <StatusCell $w={142} $mid>
              <StepButton aria-label="Zoom out"><svg width="8" height="8" viewBox="0 0 8 8" stroke="#333" strokeWidth="2"><path d="M0 4h8" /></svg></StepButton>
              <Zoom type="range" aria-label="Zoom" min={0} max={100} defaultValue={58} />
              <StepButton aria-label="Zoom in"><svg width="8" height="8" viewBox="0 0 8 8" stroke="#333" strokeWidth="2"><path d="M0 4h8M4 0v8" /></svg></StepButton>
            </StatusCell>
            <StatusCell $w={48}>192%</StatusCell>
          </StatusBar>

          <Overlay>
            <Dialog role="dialog" aria-label="Open">
              <DialogHead>
                <Button $w={78}>Cancel</Button>
                <DialogTitle>Open</DialogTitle>
                <HeadEnd>
                  <Button $w={36} aria-label="Search">
                    <svg width="16" height="16" viewBox="0 0 16 16" fill="none" stroke="#3d3d3d" strokeWidth="1.2">
                      <circle cx="7.5" cy="7.3" r="5.9" /><path d="m11.5 11.5 3 3" strokeWidth="1.8" />
                    </svg>
                  </Button>
                  <Button $w={78} $primary>Open</Button>
                </HeadEnd>
              </DialogHead>

              <DialogBody>
                <Places aria-label="Places">
                  <ul>
                    {Object.entries(placeIcons).map(([name, icon]) => (
                      <li key={name}>
                        <Place>{icon}{name}</Place>
                      </li>
                    ))}
                  </ul>
                </Places>
                <Files>
                  <PathBar>
                    <Crumb $w={26} aria-label="Back"><Chevron dir="left" /></Crumb>
                    <Crumb $w={70}><HomeIcon />user</Crumb>
                    <Crumb $w={61} $on>exam</Crumb>
                    <Crumb $w={26} aria-label="Forward"><Chevron dir="right" color="#a0a0a0" /></Crumb>
                  </PathBar>
                  <Table>
                    <colgroup>
                      <col />
                      <col width="64" />
                      <col width="101" />
                      <col width="90" />
                    </colgroup>
                    <thead>
                      <tr>
                        <th><SortHead>Name<Chevron color="#989898" /></SortHead></th>
                        <th>Size</th>
                        <th>Type</th>
                        <th>Modified</th>
                      </tr>
                    </thead>
                    <tbody>
                      {files.map((f) => (
                        <Row key={f.name} $selected={f.name === "answer_sheet2.docx"}>
                          <td><FileName><FileIcon sheet={f.type === "Spreadsheet"} />{f.name}</FileName></td>
                          <td>{f.size}</td>
                          <td>{f.type}</td>
                          <td>8 Mar 2024</td>
                        </Row>
                      ))}
                    </tbody>
                  </Table>
                </Files>
              </DialogBody>

              <DialogFoot>
                <VersionField>
                  <label htmlFor="version">Version:</label>
                  <SelectBox $w={143} $off>
                    <select id="version" disabled><option>Current version</option></select>
                    <Chevron color="#a0a0a0" />
                  </SelectBox>
                </VersionField>
                <SelectBox $w={367}>
                  <select aria-label="File type"><option>All files</option></select>
                  <Chevron />
                </SelectBox>
                <Check><input type="checkbox" />Read-only</Check>
              </DialogFoot>
            </Dialog>
          </Overlay>

          <Pointer width="18" height="26" viewBox="0 0 18 26">
            <path d="M1 1v20l5-4.5 3.3 7.5 3.7-1.6L9.7 15H16.5z" fill="#333" stroke="#fff" strokeWidth="1.2" />
          </Pointer>
        </Window>
      </Body>
    </Desktop>
  );
}
